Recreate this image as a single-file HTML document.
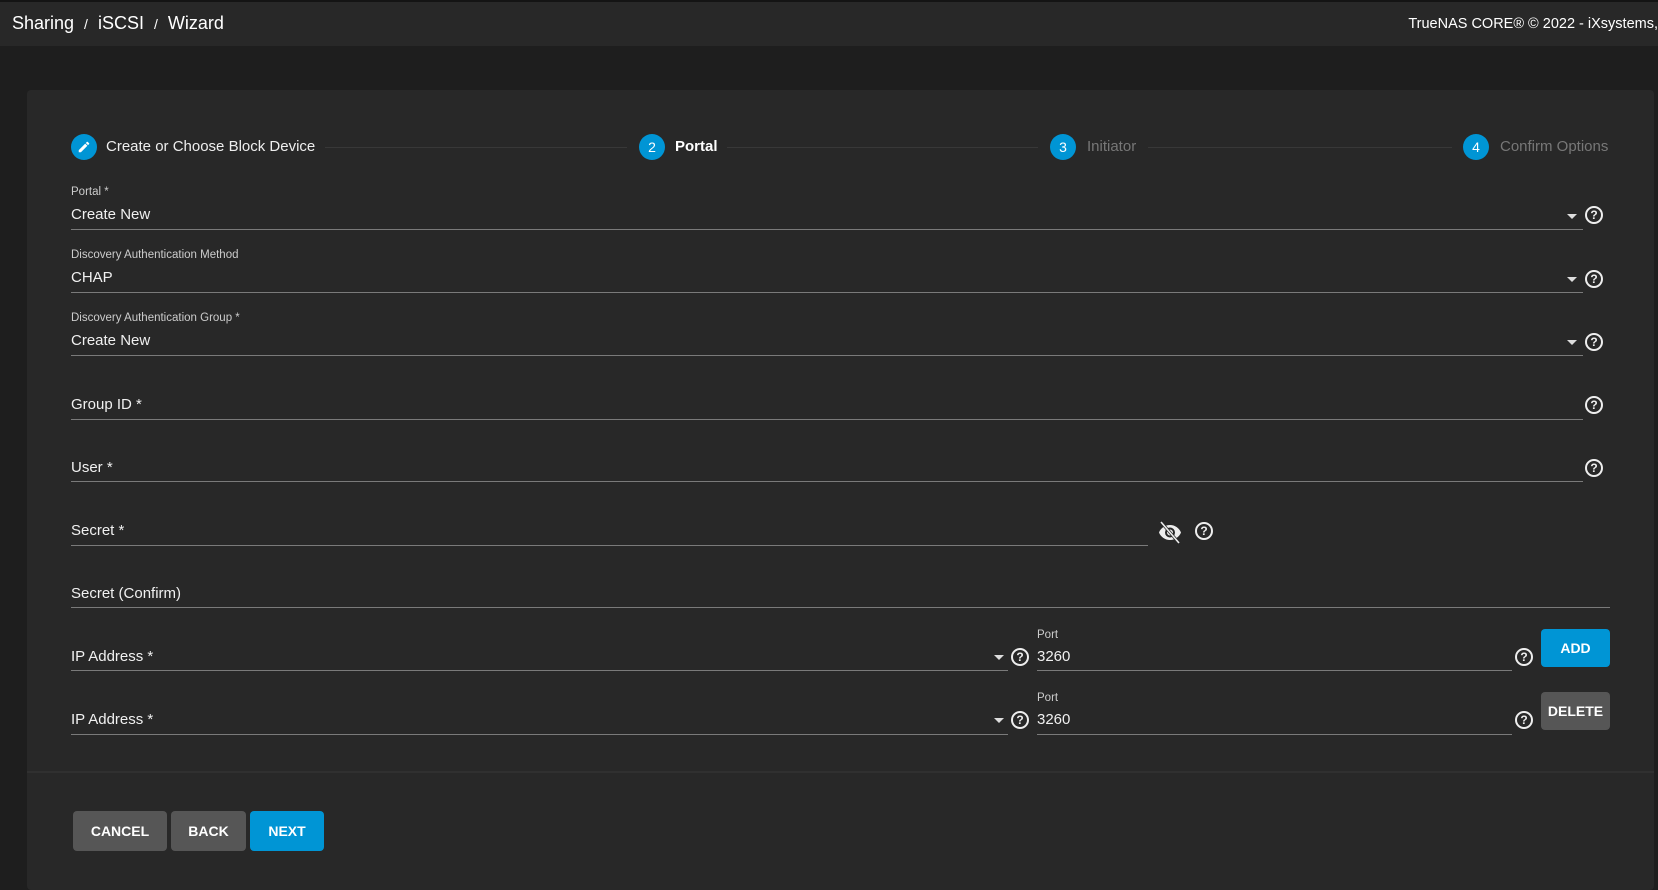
<!DOCTYPE html>
<html><head><meta charset="utf-8"><style>
*{box-sizing:border-box;margin:0;padding:0}
body{width:1658px;height:875px;background:#1e1e1e;font-family:"Liberation Sans",sans-serif;color:#fff;position:relative;overflow:hidden}
.top{position:absolute;left:0;top:2px;width:1658px;height:44px;background:#282828}
.abs{position:absolute;white-space:nowrap}
.card{position:absolute;left:27px;top:90px;width:1627px;height:800px;background:#282828;border-radius:4px}
.circ{position:absolute;width:26px;height:26px;border-radius:50%;background:#0095d5;color:#fff;font-size:14px;text-align:center;line-height:26px}
.sl{position:absolute;height:1px;background:#383838;top:147px}
.lab{position:absolute;font-size:11.5px;color:#ccc;left:71px}
.val{position:absolute;font-size:15px;color:#f0f0f0}
.ul{position:absolute;height:1px;background:#7a7a7a}
.arr{position:absolute;width:0;height:0;border-left:5px solid transparent;border-right:5px solid transparent;border-top:5px solid #ddd}
.help{position:absolute;width:18px;height:18px;border:2px solid #eee;border-radius:50%;color:#eee;font-size:12px;font-weight:bold;text-align:center;line-height:15px}
.btn{position:absolute;border-radius:4px;font-size:14px;font-weight:bold;color:#fff;text-align:center;background:#565656}
</style></head><body>
<div class="abs" style="left:0;top:0;width:1658px;height:2px;background:#141414"></div>
<div class="top"></div>
<div class="abs" style="left:12px;top:13px;font-size:18px;color:#fff">Sharing&nbsp; <span style="font-size:14px">/</span> &nbsp;iSCSI&nbsp; <span style="font-size:14px">/</span> &nbsp;Wizard</div>
<div class="abs" style="right:0;top:16px;font-size:14.5px;color:#fff">TrueNAS CORE® © 2022 - iXsystems,</div>
<div class="card"></div>

<div class="circ" style="left:71px;top:134px"><svg width="14" height="14" viewBox="0 0 24 24" style="margin-top:6px"><path fill="#fff" d="M3 17.25V21h3.75L17.81 9.94l-3.75-3.75L3 17.25zM20.71 7.04a1 1 0 0 0 0-1.41l-2.34-2.34a1 1 0 0 0-1.41 0l-1.83 1.83 3.75 3.75 1.83-1.83z"/></svg></div>
<div class="abs" style="left:106px;top:138px;font-size:15px;color:#eee">Create or Choose Block Device</div>
<div class="sl" style="left:325px;width:302px"></div>
<div class="circ" style="left:639px;top:134px">2</div>
<div class="abs" style="left:675px;top:138px;font-size:15px;font-weight:bold;color:#fff">Portal</div>
<div class="sl" style="left:727px;width:311px"></div>
<div class="circ" style="left:1050px;top:134px">3</div>
<div class="abs" style="left:1087px;top:138px;font-size:15px;color:#777">Initiator</div>
<div class="sl" style="left:1148px;width:304px"></div>
<div class="circ" style="left:1463px;top:134px">4</div>
<div class="abs" style="left:1500px;top:138px;font-size:15px;color:#777">Confirm Options</div>

<div class="lab" style="top:186px">Portal *</div>
<div class="val" style="left:71px;top:206px">Create New</div>
<div class="ul" style="left:71px;top:229px;width:1512px"></div>
<div class="arr" style="left:1567px;top:214px"></div>
<div class="help" style="left:1585px;top:206px">?</div>
<div class="lab" style="top:249px">Discovery Authentication Method</div>
<div class="val" style="left:71px;top:269px">CHAP</div>
<div class="ul" style="left:71px;top:292px;width:1512px"></div>
<div class="arr" style="left:1567px;top:277px"></div>
<div class="help" style="left:1585px;top:270px">?</div>
<div class="lab" style="top:312px">Discovery Authentication Group *</div>
<div class="val" style="left:71px;top:332px">Create New</div>
<div class="ul" style="left:71px;top:355px;width:1512px"></div>
<div class="arr" style="left:1567px;top:340px"></div>
<div class="help" style="left:1585px;top:333px">?</div>
<div class="val" style="left:71px;top:396px">Group ID *</div>
<div class="ul" style="left:71px;top:419px;width:1512px"></div>
<div class="help" style="left:1585px;top:396px">?</div>
<div class="val" style="left:71px;top:459px">User *</div>
<div class="ul" style="left:71px;top:481px;width:1512px"></div>
<div class="help" style="left:1585px;top:459px">?</div>
<div class="val" style="left:71px;top:522px">Secret *</div>
<div class="ul" style="left:71px;top:545px;width:1077px"></div>
<svg class="abs" style="left:1158px;top:520px" width="24" height="24" viewBox="0 0 24 24"><path fill="#eee" d="M12 5C7 5 2.7 8.1 1 12.5 2.7 16.9 7 20 12 20s9.3-3.1 11-7.5C21.3 8.1 17 5 12 5zm0 12.5a5 5 0 1 1 0-10 5 5 0 0 1 0 10zm0-8a3 3 0 1 0 0 6 3 3 0 0 0 0-6z"/><path stroke="#282828" stroke-width="3" d="M3 2l18 21"/><path stroke="#eee" stroke-width="1.6" d="M3 2l18 21"/></svg>
<div class="help" style="left:1195px;top:522px">?</div>
<div class="val" style="left:71px;top:585px">Secret (Confirm)</div>
<div class="ul" style="left:71px;top:607px;width:1539px"></div>
<div class="val" style="left:71px;top:648px">IP Address *</div>
<div class="ul" style="left:71px;top:670px;width:937px"></div>
<div class="arr" style="left:994px;top:655px"></div>
<div class="help" style="left:1011px;top:648px">?</div>
<div class="lab" style="left:1037px;top:629px">Port</div>
<div class="val" style="left:1037px;top:648px">3260</div>
<div class="ul" style="left:1037px;top:670px;width:475px"></div>
<div class="help" style="left:1515px;top:648px">?</div>
<div class="btn" style="left:1541px;top:629px;width:69px;height:38px;line-height:38px;background:#0095d5">ADD</div>
<div class="val" style="left:71px;top:711px">IP Address *</div>
<div class="ul" style="left:71px;top:734px;width:937px"></div>
<div class="arr" style="left:994px;top:718px"></div>
<div class="help" style="left:1011px;top:711px">?</div>
<div class="lab" style="left:1037px;top:692px">Port</div>
<div class="val" style="left:1037px;top:711px">3260</div>
<div class="ul" style="left:1037px;top:734px;width:475px"></div>
<div class="help" style="left:1515px;top:711px">?</div>
<div class="btn" style="left:1541px;top:692px;width:69px;height:38px;line-height:38px">DELETE</div>

<div class="abs" style="left:27px;top:771px;width:1627px;height:2px;background:#303030"></div>
<div class="btn" style="left:73px;top:811px;width:94px;height:40px;line-height:40px">CANCEL</div>
<div class="btn" style="left:171px;top:811px;width:75px;height:40px;line-height:40px">BACK</div>
<div class="btn" style="left:250px;top:811px;width:74px;height:40px;line-height:40px;background:#0095d5">NEXT</div>
</body></html>
